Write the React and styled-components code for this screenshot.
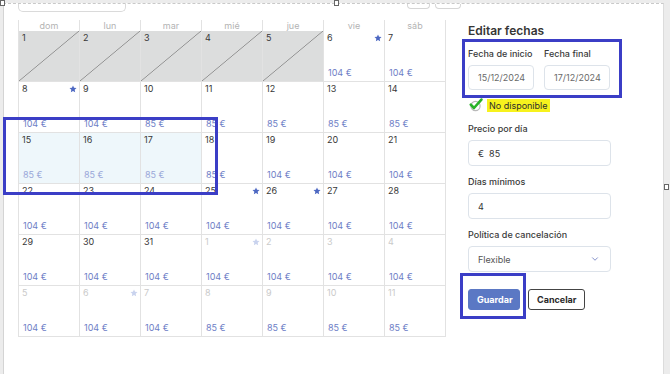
import React from 'react';
import styled, { createGlobalStyle, css } from 'styled-components';
import { ChevronDown } from 'lucide-react';

const GlobalStyle = createGlobalStyle`
  html, body { margin: 0; padding: 0; }
  body {
    background: #ececec;
    font-family: Inter, 'Noto Sans', sans-serif;
    color: #333;
    overflow: hidden;
  }
`;

const DAYS = ['dom', 'lun', 'mar', 'mié', 'jue', 'vie', 'sáb'];

const weeks = [
  [
    { d: 1, v: 'off' }, { d: 2, v: 'off' }, { d: 3, v: 'off' }, { d: 4, v: 'off' }, { d: 5, v: 'off' },
    { d: 6, p: 104, star: true }, { d: 7, p: 104 },
  ],
  [
    { d: 8, p: 104, star: true }, { d: 9, p: 104 }, { d: 10, p: 85 }, { d: 11, p: 85 },
    { d: 12, p: 85 }, { d: 13, p: 85 }, { d: 14, p: 85 },
  ],
  [
    { d: 15, p: 85, v: 'sel' }, { d: 16, p: 85, v: 'sel' }, { d: 17, p: 85, v: 'sel' }, { d: 18, p: 85 },
    { d: 19, p: 104 }, { d: 20, p: 104 }, { d: 21, p: 104 },
  ],
  [
    { d: 22, p: 104 }, { d: 23, p: 104 }, { d: 24, p: 104 }, { d: 25, p: 104, star: true },
    { d: 26, p: 104, star: true }, { d: 27, p: 104 }, { d: 28, p: 104 },
  ],
  [
    { d: 29, p: 104 }, { d: 30, p: 104 }, { d: 31, p: 104 }, { d: 1, p: 104, v: 'next', star: true },
    { d: 2, p: 104, v: 'next' }, { d: 3, p: 104, v: 'next' }, { d: 4, p: 104, v: 'next' },
  ],
  [
    { d: 5, p: 104, v: 'next' }, { d: 6, p: 104, v: 'next', star: true }, { d: 7, p: 104, v: 'next' },
    { d: 8, p: 85, v: 'next' }, { d: 9, p: 85, v: 'next' }, { d: 10, p: 85, v: 'next' }, { d: 11, p: 85, v: 'next' },
  ],
];

function Star({ light }) {
  return (
    <svg width="8" height="8" viewBox="0 0 24 24">
      <polygon
        points="12,1.5 15.1,8.3 22.5,9.1 17,14.1 18.5,21.5 12,17.8 5.5,21.5 7,14.1 1.5,9.1 8.9,8.3"
        fill={light ? '#c9d3ee' : '#4d68c2'}
      />
    </svg>
  );
}

function CheckMark() {
  return (
    <svg width="14" height="14" viewBox="0 0 14 14">
      <circle cx="6.5" cy="8" r="4.6" fill="none" stroke="#b9b9b9" strokeWidth="1.2" />
      <path d="M1.8 6.6 L5 10 L12.4 1.6" fill="none" stroke="#27b327" strokeWidth="2.6" strokeLinecap="round" strokeLinejoin="round" />
    </svg>
  );
}

function App() {
  return (
    <>
      <GlobalStyle />
      <Frame>
        <TopBar>
          <SearchStub />
          <NavButtons>
            <NavStub $w={21} />
            <NavStub $w={24} />
          </NavButtons>
        </TopBar>
        <Main>
          <Calendar>
            {DAYS.map((day) => (
              <HeadCell key={day}>{day}</HeadCell>
            ))}
            {weeks.flat().map((c, i) => (
              <Cell key={i} $v={c.v}>
                <CellTop>
                  <DayNum $v={c.v}>{c.d}</DayNum>
                  {c.star ? <Star light={c.v === 'next'} /> : null}
                </CellTop>
                {c.p ? <Price $v={c.v}>{c.p} €</Price> : null}
              </Cell>
            ))}
          </Calendar>
          <Panel>
            <Title>Editar fechas</Title>
            <DateRow>
              <DateField>
                <Label>Fecha de inicio</Label>
                <Input $small>15/12/2024</Input>
              </DateField>
              <DateField>
                <Label>Fecha final</Label>
                <Input $small>17/12/2024</Input>
              </DateField>
            </DateRow>
            <Unavailable>
              <CheckMark />
              <Highlight>No disponible</Highlight>
            </Unavailable>
            <Field>
              <Label>Precio por día</Label>
              <Input>€&nbsp;&nbsp;85</Input>
            </Field>
            <Field>
              <Label>Días mínimos</Label>
              <Input>4</Input>
            </Field>
            <Field>
              <Label>Política de cancelación</Label>
              <Select>
                <span>Flexible</span>
                <ChevronDown size={10} color="#6b7bbf" strokeWidth={2} />
              </Select>
            </Field>
            <Actions>
              <Button $primary>Guardar</Button>
              <Button>Cancelar</Button>
            </Actions>
          </Panel>
        </Main>
        <Mark $x={-1} $y={113} $w={215} $h={78} />
        <Mark $x={458} $y={35} $w={160} $h={59} />
        <Mark $x={456} $y={269} $w={66} $h={46} />
        <Handle $x={-4} $y={-4} />
        <Handle $x={330} $y={-4} />
        <Handle $x={660} $y={180} />
      </Frame>
    </>
  );
}

const Frame = styled.div`
  position: relative;
  margin: 3px 6px 0 3px;
  height: 371px;
  background: #fff;
  border-left: 1px solid #d4d4d4;
  border-top: 1px dashed #c9c9c9;
  border-right: 1px solid #dcdcdc;
`;

const TopBar = styled.div`
  display: flex;
  align-items: flex-start;
  justify-content: space-between;
  height: 16px;
  width: 443px;
  padding-left: 14px;
`;

const SearchStub = styled.div`
  width: 106px;
  height: 7px;
  border: 1px solid #dadada;
  border-top: none;
  border-radius: 0 0 5px 5px;
`;

const NavButtons = styled.div`
  display: flex;
  gap: 5px;
`;

const NavStub = styled.div`
  width: ${(p) => p.$w}px;
  height: 4px;
  border: 1px solid #d6d6d6;
  border-top: none;
  border-radius: 0 0 4px 4px;
`;

const Main = styled.div`
  display: flex;
  align-items: flex-start;
  padding-left: 14px;
`;

const Calendar = styled.div`
  display: grid;
  grid-template-columns: repeat(7, 61px);
  grid-auto-rows: 51px;
  grid-template-rows: 11px;
  border-left: 1px solid #e2e2e2;
`;

const HeadCell = styled.div`
  border-right: 1px solid #e2e2e2;
  font-size: 9px;
  line-height: 11px;
  text-align: center;
  color: #b3b3b3;
`;

const Cell = styled.div`
  display: flex;
  flex-direction: column;
  justify-content: space-between;
  padding: 2px 2px 3px 3px;
  border-right: 1px solid #e2e2e2;
  border-bottom: 1px solid #e2e2e2;
  background: #fff;
  ${(p) => p.$v === 'off' && css`
    background:
      linear-gradient(to bottom right, transparent calc(50% - 0.7px), #8e8e8e 50%, transparent calc(50% + 0.7px)),
      #dcdddd;
  `}
  ${(p) => p.$v === 'sel' && css`
    background: #eef7fb;
  `}
`;

const CellTop = styled.div`
  display: flex;
  justify-content: space-between;
  align-items: center;
  height: 10px;
`;

const DayNum = styled.span`
  font-size: 9px;
  line-height: 10px;
  color: ${(p) => (p.$v === 'next' ? '#cacaca' : '#383838')};
`;

const Price = styled.span`
  font-size: 9px;
  line-height: 10px;
  padding-left: 1px;
  color: ${(p) => (p.$v === 'sel' ? '#9aa7d9' : '#6e7ec6')};
`;

const Panel = styled.div`
  display: flex;
  flex-direction: column;
  width: 143px;
  margin-left: 22px;
  padding-top: 3px;
`;

const Title = styled.div`
  font-size: 12px;
  line-height: 16px;
  font-weight: 600;
  color: #363636;
  margin-bottom: 9px;
`;

const DateRow = styled.div`
  display: flex;
  gap: 10px;
`;

const DateField = styled.div`
  display: flex;
  flex-direction: column;
  width: 66px;
`;

const Label = styled.div`
  font-size: 9px;
  line-height: 12px;
  font-weight: 500;
  color: #3a3a3a;
  margin-bottom: 5px;
  white-space: nowrap;
`;

const Input = styled.div`
  box-sizing: border-box;
  height: ${(p) => (p.$small ? 25 : 26)}px;
  display: flex;
  align-items: center;
  padding-left: 9px;
  border: 1px solid #dde3ea;
  border-radius: 4px;
  font-size: 9px;
  color: ${(p) => (p.$small ? '#6a6a6a' : '#333')};
`;

const Unavailable = styled.div`
  display: flex;
  align-items: center;
  gap: 4px;
  margin: 8px 0 11px 1px;
  height: 14px;
`;

const Highlight = styled.span`
  background: #f7f21d;
  font-size: 9px;
  line-height: 13px;
  padding: 0 2px;
  color: #2e2e2e;
`;

const Field = styled.div`
  display: flex;
  flex-direction: column;
  margin-bottom: 10px;
`;

const Select = styled(Input)`
  justify-content: space-between;
  padding-right: 10px;
  color: #555;
`;

const Actions = styled.div`
  display: flex;
  gap: 8px;
  margin-top: 7px;
`;

const Button = styled.button`
  box-sizing: border-box;
  height: 21px;
  padding: 0 8px;
  font-family: inherit;
  font-size: 9px;
  font-weight: 700;
  border-radius: 3px;
  border: 1px solid ${(p) => (p.$primary ? '#5b78c4' : '#444')};
  background: ${(p) => (p.$primary ? '#5b78c4' : '#fff')};
  color: ${(p) => (p.$primary ? '#fff' : '#2a2a2a')};
  width: ${(p) => (p.$primary ? 52 : 57)}px;
`;

const Mark = styled.div`
  position: absolute;
  left: ${(p) => p.$x}px;
  top: ${(p) => p.$y}px;
  width: ${(p) => p.$w}px;
  height: ${(p) => p.$h}px;
  box-sizing: border-box;
  border: 3px solid #3b3ec6;
  pointer-events: none;
`;

const Handle = styled.div`
  position: absolute;
  left: ${(p) => p.$x}px;
  top: ${(p) => p.$y}px;
  width: 5px;
  height: 6px;
  box-sizing: border-box;
  border: 1px solid #666;
  background: #fff;
`;

export default App;
